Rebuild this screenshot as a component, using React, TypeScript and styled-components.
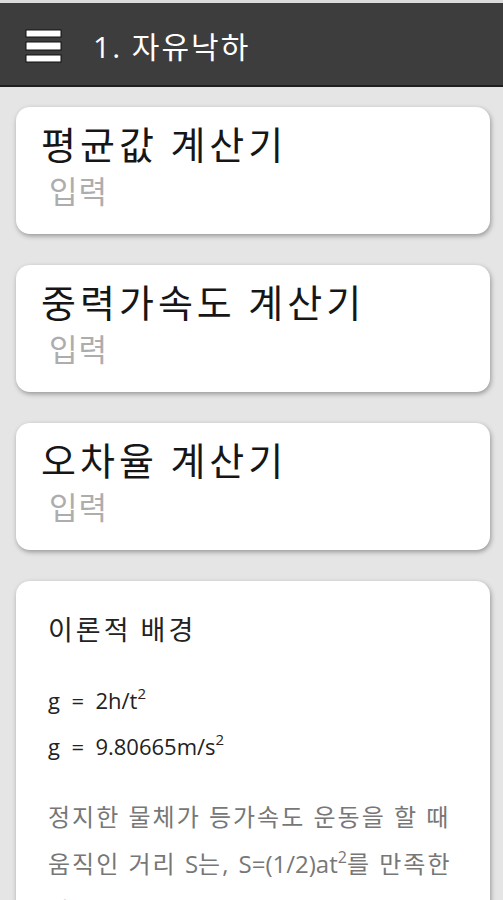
import React from "react";
import styled, { createGlobalStyle } from "styled-components";

const Global = createGlobalStyle`
  html, body { margin: 0; padding: 0; }
  body {
    background: #e5e5e5;
    font-family: "Open Sans", "Noto Sans CJK KR", sans-serif;
    overflow: hidden;
  }
`;

const Page = styled.div`
  width: 503px;
  min-height: 900px;
  background: #e5e5e5;
`;

const Header = styled.header`
  height: 82px;
  background: #3d3d3d;
  border-top: 3px solid #dcdcdc;
  border-bottom: 2px solid #1f1f1f;
  display: flex;
  align-items: center;
  padding-left: 25px;
  gap: 31px;
`;

const MenuButton = styled.div`
  width: 37px;
  height: 34px;
  display: flex;
  margin-top: 4px;
`;

const HeaderTitle = styled.h1`
  margin: 0;
  color: #ffffff;
  font-family: "Open Sans", "Noto Sans CJK KR", sans-serif;
  font-weight: 400;
  font-size: 30px;
  letter-spacing: 2px;
  line-height: 1;
  margin-top: 6px;
`;

const Main = styled.main`
  display: flex;
  flex-direction: column;
  gap: 31px;
  padding: 20px 13px 0 16px;
`;

const Card = styled.section<{ $tall?: boolean }>`
  background: #ffffff;
  border-radius: 14px;
  box-shadow: 1px 2px 5px rgba(0, 0, 0, 0.35);
  height: ${(p) => (p.$tall ? "auto" : "127px")};
  box-sizing: border-box;
  padding: ${(p) => (p.$tall ? "28px 32px 40px 32px" : "11px 20px 0 25px")};
  display: flex;
  flex-direction: column;
`;

const CardTitle = styled.div`
  font-family: "Noto Sans CJK KR", sans-serif;
  font-size: 38px;
  letter-spacing: 4px;
  line-height: 50px;
  color: #161616;
`;

const CardSub = styled.div`
  font-family: "Noto Sans CJK KR", sans-serif;
  font-size: 31px;
  line-height: 44px;
  color: #adadad;
  padding-left: 8px;
  letter-spacing: 1px;
`;

const Heading = styled.h2`
  margin: 0 0 28px 0;
  font-family: "Noto Sans CJK KR", sans-serif;
  font-weight: 400;
  font-size: 27px;
  letter-spacing: 3px;
  line-height: 40px;
  color: #222222;
`;

const Formula = styled.p`
  margin: 0;
  font-family: "Open Sans", "Noto Sans CJK KR", sans-serif;
  font-size: 22px;
  line-height: 46px;
  color: #222222;
  white-space: pre;

  sup {
    font-size: 15px;
    line-height: 0;
    vertical-align: 10px;
  }
`;

const Paragraph = styled.p`
  margin: 24px 0 0 0;
  font-family: "Open Sans", "Noto Sans CJK KR", sans-serif;
  font-size: 24px;
  letter-spacing: 2px;
  line-height: 47px;
  color: #777777;
  word-break: break-all;

  sup {
    font-size: 16px;
    line-height: 0;
    vertical-align: 10px;
  }
`;

const Latin = styled.span`
  letter-spacing: 0;
`;

const Hamburger = () => (
  <svg width="37" height="34" viewBox="0 0 37 34">
    <rect x="1" y="1" width="35" height="7" fill="#ffffff" stroke="#111" strokeWidth="1" />
    <rect x="1" y="13" width="35" height="8" fill="#ffffff" stroke="#111" strokeWidth="1" />
    <rect x="1" y="26" width="35" height="7" fill="#ffffff" stroke="#111" strokeWidth="1" />
  </svg>
);

const calculators = ["평균값 계산기", "중력가속도 계산기", "오차율 계산기"];

export default function App() {
  return (
    <Page>
      <Global />
      <Header>
        <MenuButton>
          <Hamburger />
        </MenuButton>
        <HeaderTitle>1. 자유낙하</HeaderTitle>
      </Header>
      <Main>
        {calculators.map((c) => (
          <Card key={c}>
            <CardTitle>{c}</CardTitle>
            <CardSub>입력</CardSub>
          </Card>
        ))}
        <Card $tall>
          <Heading>이론적 배경</Heading>
          <Formula>
            {"g  =  2h/t"}
            <sup>2</sup>
          </Formula>
          <Formula>
            {"g  =  9.80665m/s"}
            <sup>2</sup>
          </Formula>
          <Paragraph>
            정지한 물체가 등가속도 운동을 할 때 움직인 거리 <Latin>S</Latin>는,{" "}
            <Latin>
              S=(1/2)at<sup>2</sup>
            </Latin>
            를 만족한다.
          </Paragraph>
        </Card>
      </Main>
    </Page>
  );
}
